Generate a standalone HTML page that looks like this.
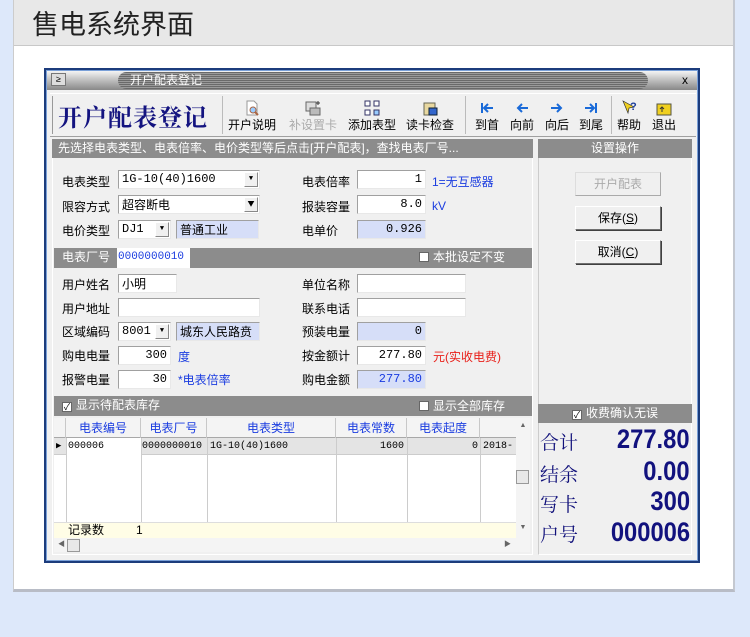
<!DOCTYPE html>
<html><head><meta charset="utf-8">
<style>
*{margin:0;padding:0;box-sizing:border-box}
body{width:750px;height:637px;background:#dde8fa;position:relative;overflow:hidden;font-family:"Liberation Sans","Noto Sans CJK SC",sans-serif;font-size:12px;color:#000}
.a{position:absolute;white-space:nowrap}
.in{position:absolute;background:#fff;border:1px solid #a0a0a0;border-right-color:#e8e8e8;border-bottom-color:#e8e8e8;height:19px;font-size:12px;line-height:17px;padding:0 3px;font-family:"Liberation Mono","Noto Sans CJK SC",monospace}
.bl{background:#d6def8}
.r{text-align:right}
.dd{position:absolute;right:1px;top:1px;width:14px;height:15px;background:#f0f0f0;border:1px solid #fff;border-right-color:#888;border-bottom-color:#888;font-size:7px;line-height:13px;text-align:center}
.bar{position:absolute;background:#8c8c8c;color:#fff;font-size:12px;line-height:19px}
.btn{position:absolute;width:86px;height:24px;background:#f0f0f0;border:1px solid #fff;border-right-color:#707070;border-bottom-color:#707070;box-shadow:1px 1px 0 #404040;text-align:center;line-height:22px;font-size:12px}
.tb{position:absolute;top:100px;text-align:center;font-size:12px;line-height:14px}
.ic{display:block;margin:0 auto 2px;width:16px;height:16px}
.cb{display:inline-block;width:10px;height:10px;background:#fff;border:1px solid #666;vertical-align:-1px;margin-right:4px;font-size:9px;line-height:8px;color:#000;text-align:center}
.th{position:absolute;top:0;height:20px;border-right:1px solid #c8c8c8;color:#1a3ce0;text-align:center;line-height:20px}
.tot{position:absolute;left:540px;font-family:"Noto Serif CJK SC",serif;font-size:19px;color:#10107a}
.val{position:absolute;right:60px;font-weight:bold;font-size:27px;color:#12127e;font-family:"Liberation Sans Narrow","Liberation Sans",sans-serif;transform:scaleX(.88);transform-origin:right}
</style></head><body>
<div class="a" style="left:13px;top:0;width:722px;height:592px;background:#fff;border-left:1px solid #ccc;border-right:2px solid #c4c8d0;border-bottom:3px solid #b8bcc6"></div>
<div class="a" style="left:14px;top:0;width:719px;height:46px;background:#e8e8e8;border-bottom:1px solid #c8c8c8"></div>
<div class="a" style="left:32px;top:5px;font-size:27px;color:#222;font-family:'Noto Sans CJK SC',sans-serif;line-height:36px">售电系统界面</div>

<div class="a" style="left:44px;top:68px;width:656px;height:495px;background:#f0f0f0;border:2px solid #1c3c7c;box-shadow:inset 0 0 0 1px #7aa0d8"></div>
<div class="a" style="left:47px;top:71px;width:650px;height:19px;background:linear-gradient(#f4f4f4,#bdbdbd 50%,#888)"></div>
<div class="a" style="left:118px;top:72px;width:530px;height:17px;border-radius:9px;background:repeating-linear-gradient(#6a6a6a 0 1px,#9a9a9a 1px 2px)"></div>
<div class="a" style="left:51px;top:73px;width:15px;height:13px;background:#ddd;border:1px solid #777;font-size:9px;line-height:11px;text-align:center">≥</div>
<div class="a" style="left:130px;top:72px;color:#fff;font-size:12px;line-height:17px">开户配表登记</div>
<div class="a" style="left:682px;top:72px;font-size:12px;line-height:17px">x</div>

<div class="a" style="left:50px;top:93px;width:646px;height:44px;background:#f0f0f0;border-top:1px solid #fff;border-bottom:1px solid #a0a0a0"></div>
<div class="a" style="left:52px;top:96px;width:1px;height:38px;background:#999"></div>
<div class="a" style="left:58px;top:99px;font-family:'Noto Serif CJK SC',serif;font-weight:bold;font-size:24px;color:#141480;line-height:34px;letter-spacing:1px">开户配表登记</div>
<div class="a" style="left:222px;top:96px;width:1px;height:38px;background:#bbb"></div>
<div class="tb" style="left:228px"><svg class="ic" viewBox="0 0 16 16"><path d="M3 1h7l3 3v11H3z" fill="#fff" stroke="#999"/><circle cx="9" cy="10" r="3" fill="#9cf" stroke="#a64"/><path d="M11 12l3 3" stroke="#a64" stroke-width="2"/></svg>开户说明</div>
<div class="tb" style="left:289px;color:#aaa"><svg class="ic" viewBox="0 0 16 16"><rect x="1" y="2" width="10" height="9" fill="#ddd" stroke="#666"/><rect x="5" y="8" width="10" height="7" fill="#bbb" stroke="#666"/><path d="M13 1v4M11 3h4" stroke="#333"/></svg>补设置卡</div>
<div class="tb" style="left:348px"><svg class="ic" viewBox="0 0 16 16"><rect x="1" y="1" width="5" height="5" fill="#fff" stroke="#336"/><rect x="10" y="1" width="5" height="5" fill="#fff" stroke="#336"/><rect x="1" y="10" width="5" height="5" fill="#fff" stroke="#336"/><rect x="10" y="10" width="5" height="5" fill="#9cf" stroke="#336"/></svg>添加表型</div>
<div class="tb" style="left:406px"><svg class="ic" viewBox="0 0 16 16"><rect x="2" y="3" width="11" height="12" fill="#e8d8a0" stroke="#665"/><rect x="7" y="8" width="8" height="7" fill="#36c" stroke="#123"/></svg>读卡检查</div>
<div class="a" style="left:465px;top:96px;width:1px;height:38px;background:#bbb"></div>
<div class="tb" style="left:475px"><svg class="ic" viewBox="0 0 16 16"><path d="M3 3v10M14 8H6M9 4L5 8l4 4" stroke="#1a6ad8" stroke-width="2" fill="none"/></svg>到首</div>
<div class="tb" style="left:510px"><svg class="ic" viewBox="0 0 16 16"><path d="M14 8H4M8 4L4 8l4 4" stroke="#1a6ad8" stroke-width="2" fill="none"/></svg>向前</div>
<div class="tb" style="left:545px"><svg class="ic" viewBox="0 0 16 16"><path d="M2 8h10M8 4l4 4-4 4" stroke="#1a6ad8" stroke-width="2" fill="none"/></svg>向后</div>
<div class="tb" style="left:579px"><svg class="ic" viewBox="0 0 16 16"><path d="M13 3v10M2 8h8M7 4l4 4-4 4" stroke="#1a6ad8" stroke-width="2" fill="none"/></svg>到尾</div>
<div class="a" style="left:611px;top:96px;width:1px;height:38px;background:#bbb"></div>
<div class="tb" style="left:617px"><svg class="ic" viewBox="0 0 16 16"><path d="M2 1l5 12 1-5 5-1z" fill="#f0d020" stroke="#333" stroke-width=".7"/><text x="9" y="10" font-size="11" font-weight="bold" fill="#1a3c9a">?</text></svg>帮助</div>
<div class="tb" style="left:652px"><svg class="ic" viewBox="0 0 16 16"><rect x="1" y="4" width="14" height="11" fill="#f0d020" stroke="#554"/><path d="M6 12V7M4 9l2-2 2 2" stroke="#333" fill="none"/></svg>退出</div>

<div class="bar" style="left:52px;top:139px;width:481px;padding-left:6px">先选择电表类型、电表倍率、电价类型等后点击[开户配表]，查找电表厂号...</div>
<div class="a" style="left:52px;top:158px;width:481px;height:397px;border:1px solid #fff;border-top:0"></div>

<div class="a" style="left:62px;top:173px">电表类型</div>
<div class="in" style="left:118px;top:170px;width:142px">1G-10(40)1600<span class="dd">▼</span></div>
<div class="a" style="left:62px;top:198px">限容方式</div>
<div class="in" style="left:118px;top:195px;width:142px;font-family:'Noto Sans CJK SC',sans-serif">超容断电<span class="dd">▼</span></div>
<div class="a" style="left:62px;top:222px">电价类型</div>
<div class="in" style="left:118px;top:220px;width:53px">DJ1<span class="dd">▼</span></div>
<div class="in bl" style="left:176px;top:220px;width:83px;font-family:'Noto Sans CJK SC',sans-serif">普通工业</div>

<div class="a" style="left:302px;top:173px">电表倍率</div>
<div class="in r" style="left:357px;top:170px;width:69px">1</div>
<div class="a" style="left:432px;top:173px;color:#1a3ce0">1=无互感器</div>
<div class="a" style="left:302px;top:198px">报装容量</div>
<div class="in r" style="left:357px;top:195px;width:69px">8.0</div>
<div class="a" style="left:432px;top:199px;color:#1a3ce0">kV</div>
<div class="a" style="left:302px;top:222px">电单价</div>
<div class="in r bl" style="left:357px;top:220px;width:69px">0.926</div>

<div class="bar" style="left:54px;top:248px;width:478px;height:20px;padding-left:8px">电表厂号</div>
<div class="in" style="left:117px;top:248px;width:73px;height:20px;color:#1a3ce0;border:none;padding:1px 1px;font-size:11px">0000000010</div>
<div class="a" style="left:419px;top:248px;color:#fff;line-height:19px"><span class="cb"></span>本批设定不变</div>

<div class="a" style="left:62px;top:276px">用户姓名</div>
<div class="in" style="left:118px;top:274px;width:59px;font-family:'Noto Sans CJK SC',sans-serif">小明</div>
<div class="a" style="left:62px;top:300px">用户地址</div>
<div class="in" style="left:118px;top:298px;width:142px"></div>
<div class="a" style="left:62px;top:323px">区域编码</div>
<div class="in" style="left:118px;top:322px;width:53px">8001<span class="dd">▼</span></div>
<div class="in bl" style="left:176px;top:322px;width:84px;font-family:'Noto Sans CJK SC',sans-serif;overflow:hidden">城东人民路贲</div>
<div class="a" style="left:62px;top:347px">购电电量</div>
<div class="in r" style="left:118px;top:346px;width:53px">300</div>
<div class="a" style="left:178px;top:348px;color:#1a3ce0">度</div>
<div class="a" style="left:62px;top:371px">报警电量</div>
<div class="in r" style="left:118px;top:370px;width:53px">30</div>
<div class="a" style="left:178px;top:371px;color:#1a3ce0">*电表倍率</div>

<div class="a" style="left:302px;top:276px">单位名称</div>
<div class="in" style="left:357px;top:274px;width:109px"></div>
<div class="a" style="left:302px;top:300px">联系电话</div>
<div class="in" style="left:357px;top:298px;width:109px"></div>
<div class="a" style="left:302px;top:323px">预装电量</div>
<div class="in r bl" style="left:357px;top:322px;width:69px">0</div>
<div class="a" style="left:302px;top:347px">按金额计</div>
<div class="in r" style="left:357px;top:346px;width:69px">277.80</div>
<div class="a" style="left:433px;top:348px;color:#e8201a">元(实收电费)</div>
<div class="a" style="left:302px;top:371px">购电金额</div>
<div class="in r bl" style="left:357px;top:370px;width:69px;color:#1a3ce0">277.80</div>

<div class="bar" style="left:54px;top:396px;width:478px;height:20px;padding-left:8px"><span class="cb">✓</span>显示待配表库存</div>
<div class="a" style="left:419px;top:397px;color:#fff;line-height:19px"><span class="cb"></span>显示全部库存</div>

<div class="a" style="left:54px;top:418px;width:476px;height:120px;background:#fff;overflow:hidden">
 <div class="a" style="left:0;top:0;width:462px;height:20px;background:#f4f4f4;border-bottom:1px solid #a8a8a8"></div>
 <div class="th" style="left:0;width:12px"></div>
 <div class="th" style="left:12px;width:75px">电表编号</div>
 <div class="th" style="left:87px;width:66px">电表厂号</div>
 <div class="th" style="left:153px;width:129px">电表类型</div>
 <div class="th" style="left:282px;width:71px">电表常数</div>
 <div class="th" style="left:353px;width:73px">电表起度</div>
 <div class="a" style="left:0;top:20px;width:462px;height:17px;background:#e4e4e4;border-bottom:1px solid #ccc;font-family:'Liberation Mono',monospace;font-size:10px;line-height:17px">
  <span class="a" style="left:2px;font-size:9px">▶</span>
  <span class="a" style="left:12px;width:75px;height:17px;background:#fff;padding-left:2px">000006</span>
  <span class="a" style="left:88px">0000000010</span>
  <span class="a" style="left:156px">1G-10(40)1600</span>
  <span class="a" style="left:282px;width:68px;text-align:right">1600</span>
  <span class="a" style="left:353px;width:71px;text-align:right">0</span>
  <span class="a" style="left:429px">2018-</span>
 </div>
 <div class="a" style="left:12px;top:20px;width:1px;height:100px;background:#ccc"></div>
 <div class="a" style="left:87px;top:20px;width:1px;height:100px;background:#ccc"></div>
 <div class="a" style="left:153px;top:20px;width:1px;height:100px;background:#ccc"></div>
 <div class="a" style="left:282px;top:20px;width:1px;height:100px;background:#ccc"></div>
 <div class="a" style="left:353px;top:20px;width:1px;height:100px;background:#ccc"></div>
 <div class="a" style="left:426px;top:20px;width:1px;height:100px;background:#ccc"></div>
 <div class="a" style="left:0;top:104px;width:462px;height:16px;background:#fffde6;border-top:1px solid #ddd;line-height:15px"><span class="a" style="left:14px">记录数</span><span class="a" style="left:82px">1</span></div>
 <div class="a" style="left:462px;top:0;width:14px;height:120px;background:#f4f4f4;font-size:7px;color:#666;text-align:center"><div style="margin-top:4px">▲</div><div class="a" style="left:0;top:52px;width:13px;height:14px;background:#e8e8e8;border:1px solid #999"></div><div class="a" style="left:0;top:106px;width:14px">▼</div></div>
</div>
<div class="a" style="left:54px;top:538px;width:476px;height:14px;background:#f4f4f4;font-size:7px;color:#666;line-height:14px"><span class="a" style="left:4px">◀</span><div class="a" style="left:13px;top:1px;width:13px;height:13px;background:#e8e8e8;border:1px solid #999"></div><span class="a" style="left:450px">▶</span></div>

<div class="bar" style="left:538px;top:139px;width:154px;text-align:center">设置操作</div>
<div class="a" style="left:538px;top:158px;width:154px;height:397px;border:1px solid #fff;border-top:0;border-left-color:#ccc"></div>
<div class="btn" style="left:575px;top:172px;color:#aaa;box-shadow:none;border-color:#ddd #aaa #aaa #ddd">开户配表</div>
<div class="btn" style="left:575px;top:206px">保存(<u>S</u>)</div>
<div class="btn" style="left:575px;top:240px">取消(<u>C</u>)</div>
<div class="bar" style="left:538px;top:404px;width:154px;text-align:center"><span class="cb">✓</span>收费确认无误</div>
<div class="tot" style="top:428px">合计</div><div class="val" style="top:424px">277.80</div>
<div class="tot" style="top:460px">结余</div><div class="val" style="top:456px">0.00</div>
<div class="tot" style="top:490px">写卡</div><div class="val" style="top:486px">300</div>
<div class="tot" style="top:520px">户号</div><div class="val" style="top:517px">000006</div>
</body></html>
